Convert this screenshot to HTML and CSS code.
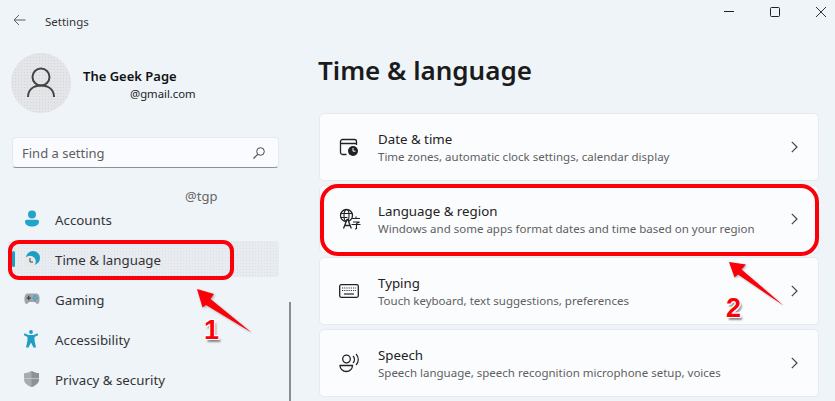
FILE: index.html
```html
<!DOCTYPE html>
<html lang="en">
<head>
<meta charset="utf-8">
<title>Settings</title>
<link rel="stylesheet" href="styles.css">
</head>
<body>
<div class="window">
  <header class="titlebar">
    <div class="title-left">
      <svg class="back" width="14" height="14" viewBox="0 0 14 14"><path d="M12.500 7H1M6 2 1 7l5 5" fill="none" stroke="#5a5d60" stroke-width="1"/></svg>
      <span class="app-name">Settings</span>
    </div>
    <div class="controls">
      <svg width="12" height="12" viewBox="0 0 12 12"><path d="M1 5.500h10" stroke="#222" stroke-width="1"/></svg>
      <svg width="12" height="12" viewBox="0 0 12 12"><rect x="1.500" y="1.500" width="9" height="9" rx="1" fill="none" stroke="#222" stroke-width="1"/></svg>
      <svg width="12" height="12" viewBox="0 0 12 12"><path d="M1 1l10 10M11 1 1 11" stroke="#333" stroke-width="1"/></svg>
    </div>
  </header>
  <div class="body">
    <aside class="sidebar">
      <div class="profile">
        <div class="avatar">
          <svg width="30" height="32" viewBox="0 0 30 32"><circle cx="15" cy="10" r="8.500" fill="none" stroke="#444" stroke-width="2"/><path d="M2 30c0-7 5-11.500 13-11.500S28 23 28 30" fill="none" stroke="#444" stroke-width="2"/></svg>
        </div>
        <div class="who">
          <div class="name">The Geek Page</div>
          <div class="email">@gmail.com</div>
        </div>
      </div>
      <div class="search">
        <span class="search-text">Find a setting</span>
        <svg width="14" height="14" viewBox="0 0 14 14"><circle cx="8.500" cy="5.500" r="3.800" fill="none" stroke="#444" stroke-width="1"/><path d="M5.700 8.300 1.500 12.500" stroke="#444" stroke-width="1.200"/></svg>
      </div>
      <nav class="nav">
        <div class="nav-item">
          <svg width="16" height="18" viewBox="0 0 16 18"><circle cx="8" cy="4.500" r="4" fill="#22a3c9"/><path d="M1 11.500c0-1 .8-1.700 1.800-1.700h10.400c1 0 1.800.7 1.800 1.700 0 3.500-3.200 5-7 5s-7-1.500-7-5z" fill="#22a3c9"/></svg>
          <span>Accounts</span>
        </div>
        <div class="nav-item selected">
          <i class="accent"></i>
          <svg width="16" height="17" viewBox="0 0 16 17"><circle cx="9" cy="7" r="7" fill="#1f9ec4"/><circle cx="6" cy="10.500" r="5.800" fill="#e8e8e8"/><path d="M6 7v4h3" fill="none" stroke="#444" stroke-width="1"/></svg>
          <span>Time &amp; language</span>
        </div>
        <div class="nav-item">
          <svg width="16" height="12" viewBox="0 0 16 12"><path d="M3.500.5h9c1.500 0 2.700 1.500 3 4 .3 2.700-.2 6.500-2 6.500-1.300 0-2-2-3.300-2H5.800C4.500 9 3.800 11 2.500 11 .7 11 .2 7.200.5 4.500.8 2 2 .5 3.500.5z" fill="#a2a5a8"/><path d="M2.500 5h4.500M4.700 2.800v4.400" stroke="#333" stroke-width="1.100"/><circle cx="11" cy="3" r="1" fill="#2aa3cc"/><circle cx="13" cy="5" r="1" fill="#2aa3cc"/><circle cx="11" cy="7" r="1" fill="#2aa3cc"/><circle cx="9.500" cy="5" r="1" fill="#2aa3cc"/></svg>
          <span>Gaming</span>
        </div>
        <div class="nav-item">
          <svg width="14" height="18" viewBox="0 0 14 18"><circle cx="7" cy="2" r="1.900" fill="#1f9ec4"/><path d="M.3 3.200 4.500 5h5l4.200-1.800.3 2L10.500 7v3.500L12 17.500h-2.500L7 12.500 4.500 17.500H2L3.500 10.500V7L0 5.200z" fill="#1f9ec4"/></svg>
          <span>Accessibility</span>
        </div>
        <div class="nav-item">
          <svg width="15" height="16" viewBox="0 0 15 16"><path d="M7.500 0c2 1.300 4.700 2 7.500 2.200V8c0 4-3.200 6.500-7.500 8C3.200 14.500 0 12 0 8V2.200C2.800 2 5.500 1.300 7.500 0z" fill="#a9acaf"/><path d="M7.500 0v16H7.500C11.800 14.500 15 12 15 8V2.200C12.200 2 9.500 1.300 7.500 0z" fill="#8f9295"/><path d="M0 7.500h15" stroke="#c9cbcd" stroke-width=".8"/></svg>
          <span>Privacy &amp; security</span>
        </div>
      </nav>
    </aside>
    <main class="main">
      <h1 class="page-title">Time &amp; language</h1>
      <section class="cards">
        <div class="card">
          <svg class="card-icon" width="20" height="20" viewBox="0 0 20 20"><path d="M7.500 17.500H3.500a2 2 0 0 1-2-2v-11a2 2 0 0 1 2-2h12a2 2 0 0 1 2 2V8M1.500 6.500h16" fill="none" stroke="#222" stroke-width="1.300"/><circle cx="14" cy="14" r="5" fill="#222"/><path d="M14 11v3.200h2.500" fill="none" stroke="#fff" stroke-width="1"/></svg>
          <div class="card-text"><div class="card-title">Date &amp; time</div><div class="card-sub">Time zones, automatic clock settings, calendar display</div></div>
          <svg class="chev" width="7" height="12" viewBox="0 0 7 12"><path d="M.8.8 6 6 .8 11.200" fill="none" stroke="#444" stroke-width="1.200"/></svg>
        </div>
        <div class="card">
          <svg class="card-icon" width="22" height="22" viewBox="0 0 22 22"><circle cx="7.500" cy="7.500" r="6" fill="none" stroke="#222" stroke-width="1.300"/><ellipse cx="7.500" cy="7.500" rx="2.500" ry="6" fill="none" stroke="#222" stroke-width="1.100"/><path d="M1.500 5.500h12M1.500 9.500h7" stroke="#222" stroke-width="1.100"/><path d="M4.500 20.500 8 11.500h.8l3.500 9M6 17.500h5" fill="#fbfcfe" stroke="#222" stroke-width="1.300"/><path d="M13 10.500h8M17 8.500v2M14 14h6.500l-3 1.500M12.500 16.500h9M17.500 15.500v5l-1.500.5" fill="none" stroke="#222" stroke-width="1.100"/></svg>
          <div class="card-text"><div class="card-title">Language &amp; region</div><div class="card-sub">Windows and some apps format dates and time based on your region</div></div>
          <svg class="chev" width="7" height="12" viewBox="0 0 7 12"><path d="M.8.8 6 6 .8 11.200" fill="none" stroke="#444" stroke-width="1.200"/></svg>
        </div>
        <div class="card">
          <svg class="card-icon" width="20" height="14" viewBox="0 0 20 14"><rect x=".7" y=".7" width="18.600" height="12.600" rx="1.500" fill="none" stroke="#222" stroke-width="1.300"/><path d="M3 4h14M3 6.500h14" stroke="#333" stroke-width="1.200" stroke-dasharray="1.200 1"/><path d="M5 10h10" stroke="#222" stroke-width="1.200"/></svg>
          <div class="card-text"><div class="card-title">Typing</div><div class="card-sub">Touch keyboard, text suggestions, preferences</div></div>
          <svg class="chev" width="7" height="12" viewBox="0 0 7 12"><path d="M.8.8 6 6 .8 11.200" fill="none" stroke="#444" stroke-width="1.200"/></svg>
        </div>
        <div class="card">
          <svg class="card-icon" width="20" height="20" viewBox="0 0 20 20"><circle cx="7.500" cy="6" r="3.800" fill="none" stroke="#222" stroke-width="1.300"/><path d="M1 12.500h12.500c0 3.500-2.800 6-6.200 6S1 16 1 12.500z" fill="none" stroke="#222" stroke-width="1.300"/><path d="M14 3c1 1 1.500 2 1.500 3.500S15 9 14 10M17 1c1.500 1.500 2.300 3.300 2.300 5.500S18.500 10.500 17 12" fill="none" stroke="#222" stroke-width="1.200"/></svg>
          <div class="card-text"><div class="card-title">Speech</div><div class="card-sub">Speech language, speech recognition microphone setup, voices</div></div>
          <svg class="chev" width="7" height="12" viewBox="0 0 7 12"><path d="M.8.8 6 6 .8 11.200" fill="none" stroke="#444" stroke-width="1.200"/></svg>
        </div>
      </section>
    </main>
  </div>

  <span class="tag">@tgp</span>
  <i class="scrollbar"></i>
  <i class="ring ring-one"></i>
  <i class="ring ring-two"></i>
  <svg class="arrows" width="835" height="401" viewBox="0 0 835 401">
    <path d="M197 289 214 294 210.500 299 251.500 332.500 206 305 202.500 307.500z" fill="#fb0008"/>
    <path d="M729 262 746 264.500 741.500 269.500 783.500 305.500 738 274.500 734.500 277.500z" fill="#fb0008"/>
  </svg>
  <span class="num num-one">1</span>
  <span class="num num-two">2</span>
</div>
</body>
</html>
```

FILE: styles.css
```css
* { box-sizing: border-box; }
html, body { margin: 0; padding: 0; }
body { font-family: "Noto Sans", "Open Sans", sans-serif; color: #1c1c1c; background: #eff4f9; }
.window { position: relative; width: 835px; height: 401px; overflow: hidden; background: #eff4f9; }
.titlebar { height: 40px; display: flex; justify-content: space-between; padding: 2px 8px 0 13px; }
.title-left { display: flex; align-items: center; height: 38px; }
.back { margin-right: 18px; margin-top: -2px; }
.app-name { font-size: 11.500px; color: #333; }
.controls { display: flex; gap: 34px; padding-top: 4px; }
.body { display: flex; }
.sidebar { width: 290px; flex: none; padding: 13px 11px 0 8px; }
.profile { display: flex; align-items: center; gap: 12px; padding-left: 3px; height: 60px; }
.avatar { width: 60px; height: 60px; border-radius: 50%; background-color: #e3e5e8; background-image: radial-gradient(#d3d5d8 .6px, transparent .7px); background-size: 3px 3px; display: flex; align-items: center; justify-content: center; }
.who { padding-top: 2px; }
.name { font-size: 13px; font-weight: 600; color: #111; line-height: 18px; }
.email { font-size: 11.300px; color: #222; line-height: 17px; margin-left: 47px; margin-top: 0; }
.search { margin: 24px 0 0 4px; height: 31px; background: #fafbfe; border: 1px solid #e6e9ed; border-bottom: 1px solid #8f9194; border-radius: 4px; display: flex; align-items: center; justify-content: space-between; padding: 0 12px 0 9px; }
.search-text { font-size: 13px; color: #5d5d5d; }
.nav { margin-top: 33px; display: flex; flex-direction: column; gap: 4px; }
.nav-item { position: relative; height: 36px; display: flex; align-items: center; padding-left: 16px; border-radius: 4px; font-size: 13.300px; color: #333; }
.nav-item svg { flex: none; }
.nav-item span { position: absolute; left: 47px; top: 10px; }
.selected { background-color: #e8ecf1; background-image: radial-gradient(#dcdfe4 .6px, transparent .7px); background-size: 3px 3px; }
.accent { position: absolute; left: 4px; top: 10px; width: 3px; height: 16px; border-radius: 2px; background: #1f9ec4; }
.main { flex: 1; padding: 0 16px 0 28px; }
.page-title { margin: 9px 0 0; font-size: 26px; line-height: 42px; font-weight: 600; color: #1b1b1b; }
.cards { margin-top: 22px; padding-left: 1px; display: flex; flex-direction: column; gap: 4px; }
.card { position: relative; height: 68px; background: #fbfcfe; border: 1px solid #e7eaee; border-radius: 5px; display: flex; align-items: center; padding: 0 20px 0 19px; }
.card-icon { flex: none; }
.card-text { position: absolute; left: 58px; top: 16px; }
.card-title { font-size: 13.300px; line-height: 19px; color: #222; }
.card-sub { font-size: 11.500px; line-height: 16px; color: #5f5f5f; }
.chev { margin-left: auto; flex: none; }
.tag { position: absolute; left: 185px; top: 187px; font-size: 13px; color: #666; }
.scrollbar { position: absolute; left: 289px; top: 302px; width: 2px; height: 99px; background: #8a8c8f; }
.ring { position: absolute; border: 4px solid #fb0008; }
.ring-one { left: 8px; top: 240px; width: 226px; height: 40px; border-radius: 11px; }
.ring-two { left: 320px; top: 184px; width: 499px; height: 72px; border-radius: 18px; }
.arrows { position: absolute; left: 0; top: 0; pointer-events: none; filter: drop-shadow(1px 1px 1px rgba(0,0,0,.3)); }
.num { position: absolute; font-family: "Liberation Sans", sans-serif; font-weight: 700; font-size: 27px; line-height: 27px; color: #fb0008; text-shadow: -1px -1px 0 #fff, 1px -1px 0 #fff, -1px 1px 0 #fff, 1px 1px 0 #fff, 0 -1px 0 #fff, 0 1px 0 #fff, -1px 0 0 #fff, 1px 0 0 #fff, 2px 3px 2px rgba(0,0,0,.45); }
.num-one { left: 204px; top: 317px; }
.num-two { left: 726px; top: 295px; }
```
